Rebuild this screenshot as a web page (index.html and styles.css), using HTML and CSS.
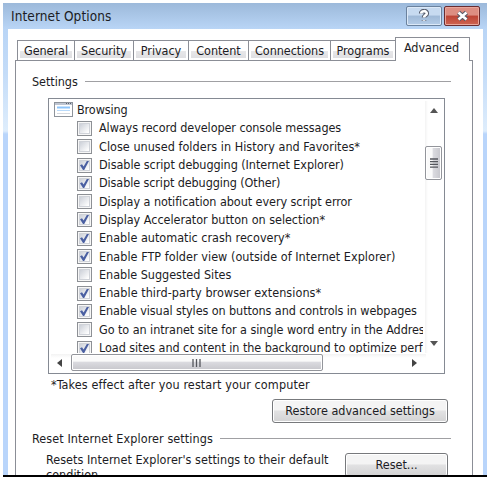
FILE: index.html
```
<!DOCTYPE html>
<html lang="en">
<head>
<meta charset="utf-8">
<title>Internet Options</title>
<link rel="stylesheet" href="styles.css">
</head>
<body>
<svg width="0" height="0" class="defs"><symbol id="tick" viewBox="0 0 15 15"><path d="M3 7.2L5 6.2L6.6 8.6L9.8 3H12L7.2 12H6z" fill="#4b60a2"/></symbol></svg>
<div class="window">
  <header class="titlebar">
    <h1 class="title">Internet Options</h1>
    <span class="caption help"><svg width="12" height="14" viewBox="0 0 12 14"><path class="halo" d="M3.2 4.6C3.2 1.4 8.8 1.4 8.8 4.4C8.8 6.3 6 6.3 6 8.6M6 11v.8"/><path class="mark" d="M3.2 4.6C3.2 1.4 8.8 1.4 8.8 4.4C8.8 6.3 6 6.3 6 8.6M6 11v.8"/></svg></span>
    <span class="caption close"><svg width="15" height="12" viewBox="0 0 15 12"><path class="halo" d="M3.5 2.5l8 7M11.5 2.5l-8 7"/><path class="mark" d="M3.5 2.5l8 7M11.5 2.5l-8 7"/></svg></span>
  </header>
  <div class="client">
    <nav class="tabs">
      <span class="tab general">General</span><span class="tab security">Security</span><span class="tab privacy">Privacy</span><span class="tab content">Content</span><span class="tab connections">Connections</span><span class="tab programs">Programs</span><span class="tab active">Advanced</span>
    </nav>
    <main class="panel">
      <div class="legend"><span class="l1">Settings</span></div>
      <div class="listbox">
        <div class="viewport">
          <div class="rows">
            <div class="group"><svg class="winicon" width="19" height="15" viewBox="0 0 19 15"><rect x=".5" y=".5" width="18" height="14" fill="#fff" stroke="#8d939b"/><path d="M1 2h17" stroke="#bec5d1" stroke-width="2"/><path d="M12 1.5h1m1 0h1m1 0h1" stroke="#59616e"/><path d="M3 5.5h13" stroke="#8dc4fa" stroke-width="2"/><path d="M3 8.5h13" stroke="#b9dafa"/><path d="M3 11.5h13" stroke="#d5d9df"/></svg><span class="t0">Browsing</span></div>
            <div class="row"><i class="box"></i><span class="t1">Always record developer console messages</span></div>
            <div class="row"><i class="box"></i><span class="t2">Close unused folders in History and Favorites*</span></div>
            <div class="row"><i class="box"><svg width="15" height="15"><use href="#tick"/></svg></i><span class="t3">Disable script debugging (Internet Explorer)</span></div>
            <div class="row"><i class="box"><svg width="15" height="15"><use href="#tick"/></svg></i><span class="t4">Disable script debugging (Other)</span></div>
            <div class="row"><i class="box"></i><span class="t5">Display a notification about every script error</span></div>
            <div class="row"><i class="box"><svg width="15" height="15"><use href="#tick"/></svg></i><span class="t6">Display Accelerator button on selection*</span></div>
            <div class="row"><i class="box"><svg width="15" height="15"><use href="#tick"/></svg></i><span class="t7">Enable automatic crash recovery*</span></div>
            <div class="row"><i class="box"><svg width="15" height="15"><use href="#tick"/></svg></i><span class="t8">Enable FTP folder view (outside of Internet Explorer)</span></div>
            <div class="row"><i class="box"></i><span class="t9">Enable Suggested Sites</span></div>
            <div class="row"><i class="box"><svg width="15" height="15"><use href="#tick"/></svg></i><span class="t10">Enable third-party browser extensions*</span></div>
            <div class="row"><i class="box"><svg width="15" height="15"><use href="#tick"/></svg></i><span class="t11">Enable visual styles on buttons and controls in webpages</span></div>
            <div class="row"><i class="box"></i><span class="t12">Go to an intranet site for a single word entry in the Addres</span></div>
            <div class="row"><i class="box"><svg width="15" height="15"><use href="#tick"/></svg></i><span class="t13">Load sites and content in the background to optimize perfo</span></div>
          </div>
          <div class="vscroll">
            <svg class="up" width="8" height="5" viewBox="0 0 8 5"><path d="M0 5L4 0l4 5z"/></svg>
            <div class="vthumb"><svg width="8" height="10" viewBox="0 0 8 10"><path d="M0 1h8M0 3.7h8M0 6.4h8M0 9.1h8" /></svg></div>
            <svg class="down" width="8" height="5" viewBox="0 0 8 5"><path d="M0 0h8L4 5z"/></svg>
          </div>
        </div>
        <div class="hscroll">
          <svg class="left" width="5" height="8" viewBox="0 0 5 8"><path d="M5 0v8L0 4z"/></svg>
          <div class="hthumb"><svg width="10" height="8" viewBox="0 0 10 8"><path d="M1 0v8M4.5 0v8M8 0v8"/></svg></div>
          <svg class="right" width="5" height="8" viewBox="0 0 5 8"><path d="M0 0v8l5-4z"/></svg>
        </div>
      </div>
      <p class="note">*Takes effect after you restart your computer</p>
      <div class="actions"><span class="button restore">Restore advanced settings</span></div>
      <div class="legend second"><span class="l2">Reset Internet Explorer settings</span></div>
      <div class="reset">
        <p class="desc">Resets Internet Explorer's settings to their default<br>condition.</p>
        <span class="button resetbtn">Reset...</span>
      </div>
    </main>
  </div>
</div>
</body>
</html>
```
FILE: styles.css
```
* { box-sizing: border-box; }
body {
  margin: 0;
  height: 481px;
  overflow: hidden;
  background: #fff;
  color: #1c1c24;
  font: 12.5px/18px "DejaVu Sans Condensed", "DejaVu Sans", sans-serif;
  white-space: nowrap;
}
h1, p { margin: 0; font: inherit; }
svg { display: block; flex: none; }
.defs { position: absolute; }
.window {
  width: 484px;
  height: 474px;
  margin: 3px 0 0 3px;
  padding: 0 4px 0 5px;
  overflow: hidden;
  border-bottom: 2px solid #000;
  background: linear-gradient(#9cb9da 0, #b9d5f6 26px, #c4dcf8 70px, #deedfc 128px, #b9d5fb 131px);
}
.titlebar {
  display: flex;
  align-items: flex-start;
  height: 26px;
  padding-left: 3px;
}
.title { flex: 1; padding-top: 4px; font-size: 13.5px; letter-spacing: .1px; }
.caption {
  display: flex;
  align-items: center;
  justify-content: center;
  width: 36px;
  height: 20px;
  margin-top: 3px;
  border: 1px solid #6b829e;
  border-radius: 2px;
  box-shadow: inset 0 0 0 1px #dce9f8;
  background: linear-gradient(#c7daf0 45%, #9fb9d7 50%, #b5cce7);
}
.close {
  margin: 3px 3px 0 2px;
  border-color: #692c30;
  box-shadow: inset 0 0 0 1px #e9a69b;
  background: linear-gradient(#dd8e82 45%, #bd4435 50%, #ce6452);
}
.caption path { fill: none; }
.caption .halo { stroke: #545968; stroke-width: 4.6; }
.caption .mark { stroke: #fff; stroke-width: 2.6; }
.client { height: 460px; padding: 8px 10px 0 7px; background: #fff; }
.tabs { display: flex; align-items: flex-end; height: 23px; padding-left: 2px; }
.tab {
  display: flex;
  justify-content: center;
  height: 20px;
  padding-top: 1px;
  border: 1px solid #8b8e96;
  border-right-width: 0;
  border-bottom: 0;
  box-shadow: inset 0 0 0 2px #fff;
  background: linear-gradient(#fff 50%, #e7e7e9 55%, #dddde0);
  letter-spacing: -.05px;
}
.general { width: 57px; }
.security { width: 59px; }
.privacy { width: 55px; }
.content { width: 60px; }
.connections { width: 82px; }
.programs { width: 65px; }
.active {
  width: 75px;
  height: 24px;
  margin-bottom: -1px;
  padding-right: 2px;
  border-right-width: 1px;
  background: #fff;
}
.panel { height: 430px; border: 1px solid #8b8e96; padding: 11px 21px 0 16px; }
.legend { display: flex; align-items: center; gap: 7px; height: 18px; }
.legend::after { content: ""; flex: 1; height: 1px; background: #a0a0a3; }
.l1 { letter-spacing: -.05px; padding-top: 1px; }
.listbox {
  width: 397px;
  height: 276px;
  margin: 8px 0 0 16px;
  border: 1px solid #858a93;
  padding: 2px;
}
.viewport { display: flex; height: 252px; overflow: hidden; }
.rows { width: 372px; margin-right: 2px; overflow: hidden; }
.group, .row { display: flex; align-items: center; height: 18.3px; }
.group { gap: 4px; padding-left: 3px; }
.row { gap: 7px; padding-left: 26px; }
.group svg { margin-top: -1px; }
.t0 { letter-spacing: -.1px; }
.t1 { letter-spacing: -.08px; }
.t2 { letter-spacing: .03px; }
.t3 { letter-spacing: -.06px; }
.t4 { letter-spacing: -.1px; }
.t5 { letter-spacing: -.06px; }
.t6 { letter-spacing: -.03px; }
.t8 { letter-spacing: .04px; }
.t9 { letter-spacing: -.02px; }
.t10 { letter-spacing: .05px; }
.t11 { letter-spacing: -.09px; }
.t12 { letter-spacing: -.06px; }
.t13 { letter-spacing: -.06px; }
.box {
  flex: none;
  width: 15px;
  height: 15px;
  border: 1px solid #8d9095;
  box-shadow: inset 0 0 0 1px #f7f7f7, inset 0 0 0 2px #d0d3d9;
  background: linear-gradient(135deg, #ccd0d8 15%, #fff 80%);
}
.box svg { margin: -1px; }
.vscroll {
  display: flex;
  flex-direction: column;
  align-items: center;
  width: 17px;
  background: linear-gradient(90deg, #f3f3f3, #fff 3px);
}
.up { margin-top: 7px; fill: #555; }
.vthumb {
  display: flex;
  align-items: center;
  justify-content: center;
  width: 17px;
  height: 34px;
  margin-top: 33px;
  border: 1px solid #93959b;
  border-radius: 2px;
  box-shadow: inset 0 0 0 1px #fff;
  background: linear-gradient(90deg, #fafafa 40%, #dadadf 50%, #c6c6cc);
}
.vthumb path, .hthumb path { stroke: #55575d; stroke-width: 1.3; }
.down { margin: auto 0 7px; fill: #555; }
.hscroll { display: flex; align-items: center; height: 17px; margin-top: 1px; width: 375px; background: linear-gradient(#f3f3f3, #fff 4px); }
.left { margin-left: 6px; fill: #444; }
.hthumb {
  display: flex;
  align-items: center;
  justify-content: center;
  width: 252px;
  height: 17px;
  margin-left: 9px;
  border: 1px solid #93959b;
  border-radius: 2px;
  box-shadow: inset 0 0 0 1px #fff;
  background: linear-gradient(#fafafa 40%, #dadadf 50%, #c6c6cc);
}
.right { margin-left: auto; margin-right: 9px; fill: #444; }
.note { height: 18px; margin: 2px 0 0 19px; letter-spacing: .1px; }
.actions { display: flex; justify-content: flex-end; margin-top: 5px; padding-right: 3px; }
.button {
  display: flex;
  justify-content: center;
  height: 24px;
  padding-top: 2px;
  border: 1px solid #77797c;
  border-radius: 3px;
  box-shadow: inset 0 0 0 1px #fff;
  background: linear-gradient(#f4f4f4 45%, #e2e2e3 50%, #d2d2d3);
}
.restore { width: 176px; }
.resetbtn { width: 103px; margin-top: 3px; }
.second { margin-top: 6px; }
.l2 { letter-spacing: .08px; padding-top: 1px; }
.reset { display: flex; justify-content: space-between; padding: 3px 3px 0 14px; }
.desc { line-height: 15px; padding-top: 2px; letter-spacing: .03px; }
```
